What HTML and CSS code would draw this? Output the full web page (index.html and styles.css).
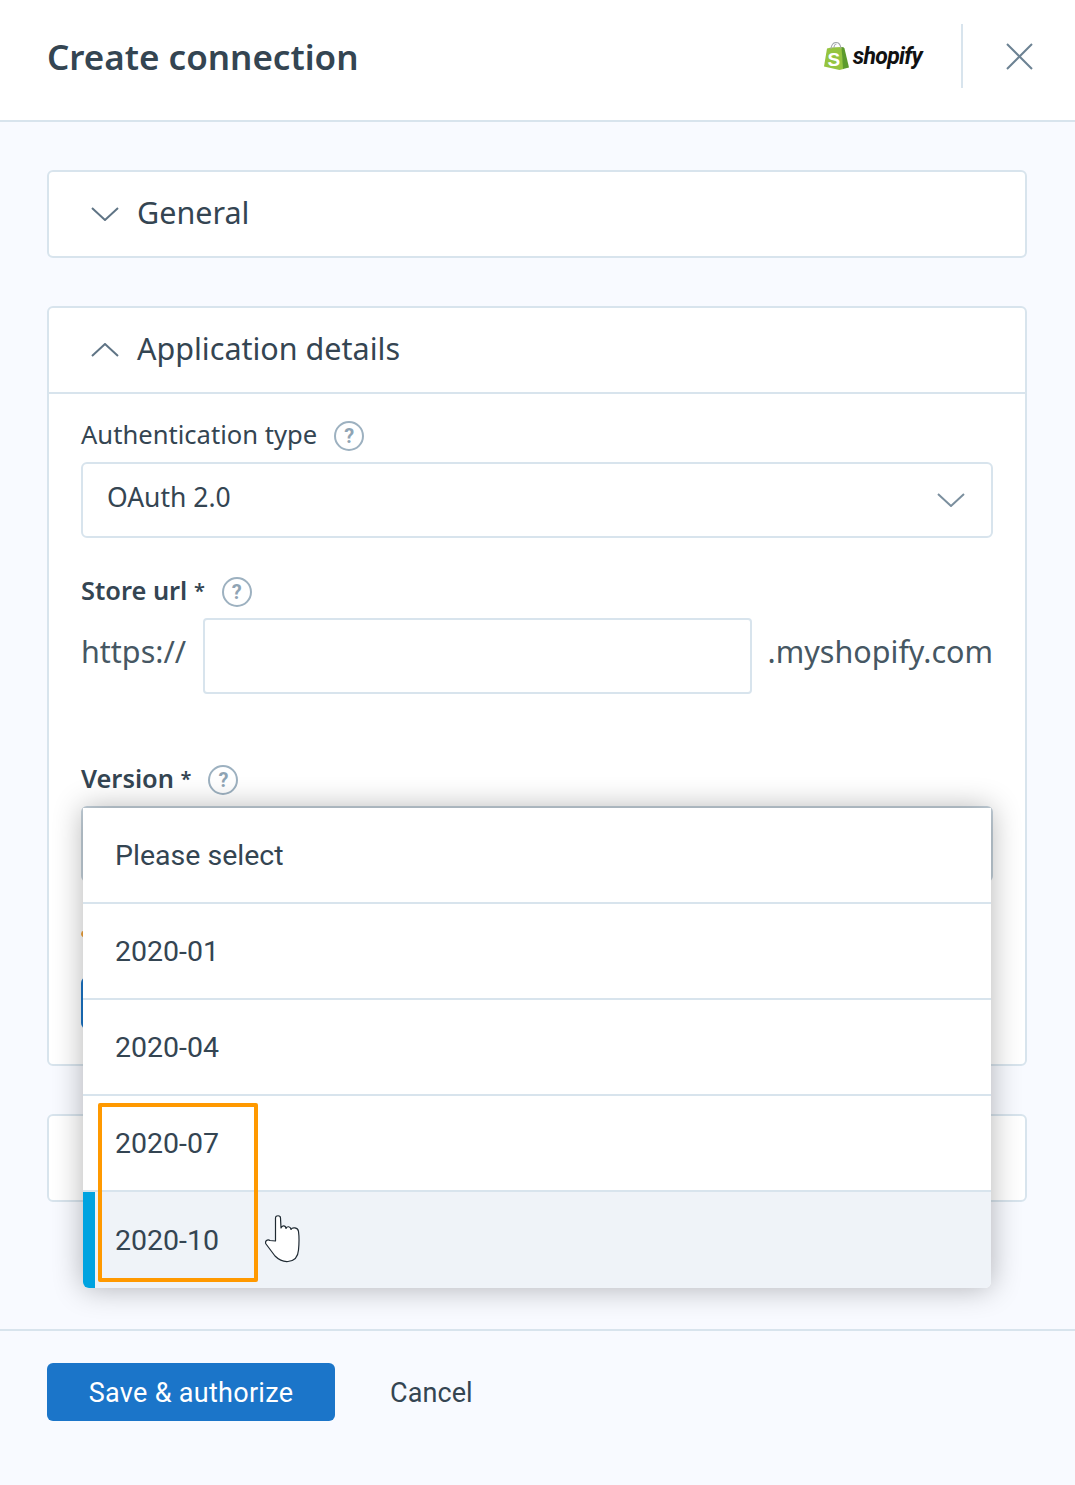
FILE: index.html
```html
<!DOCTYPE html>
<html lang="en">
<head>
<meta charset="utf-8">
<title>Create connection</title>
<link rel="stylesheet" href="styles.css">
</head>
<body>
<div class="page">
  <header class="header">
    <h1 class="title">Create connection</h1>
    <div class="header-right">
      <div class="logo">
        <svg class="logo-bag" width="25" height="28" viewBox="0 0 25 28"><path d="M0 24.500 3 6.500 7 5.500 18 5 19.500 27 15.500 28z" fill="#95c43f"/><path d="M17.500 5l2 .3 1 1.200 4.500 19-6 1.500z" fill="#5c9a2c"/><path d="M7 7C7 3 9.500 .5 12 .5c3 0 4.500 2.500 5 6M10 6c0-2 1-4 2.500-4" fill="none" stroke="#a4a9ac" stroke-width="1.100"/><text x="3.500" y="24" class="logo-s">S</text></svg>
        <span class="logo-text">shopify</span>
      </div>
      <div class="header-sep"></div>
      <button class="close" aria-label="Close">
        <svg width="27" height="27" viewBox="0 0 27 27"><path d="M1 1l25 25M26 1L1 26" stroke="#6c8293" stroke-width="2" fill="none"/></svg>
      </button>
    </div>
  </header>

  <main class="main">
    <section class="card">
      <div class="card-head">
        <svg class="chev" width="28" height="14" viewBox="0 0 28 14"><path d="M1 1l13 12L27 1" fill="none" stroke="#5f7485" stroke-width="2"/></svg>
        <h2 class="card-title">General</h2>
      </div>
    </section>

    <section class="card">
      <div class="card-head card-head-open">
        <svg class="chev" width="28" height="14" viewBox="0 0 28 14"><path d="M1 13L14 1l13 12" fill="none" stroke="#5f7485" stroke-width="2"/></svg>
        <h2 class="card-title">Application details</h2>
      </div>
      <div class="card-body">
        <div class="label-row label-row-auth">
          <span class="label">Authentication type</span>
          <span class="help">?</span>
        </div>
        <div class="select">
          <span>OAuth 2.0</span>
          <svg width="28" height="14" viewBox="0 0 28 14"><path d="M1 1l13 12L27 1" fill="none" stroke="#7b8f9e" stroke-width="2"/></svg>
        </div>

        <div class="label-row label-row-store">
          <span class="label label-strong">Store url <span class="req">*</span></span>
          <span class="help">?</span>
        </div>
        <div class="url-row">
          <span class="url-text url-prefix">https://</span>
          <div class="url-input"></div>
          <span class="url-text">.myshopify.com</span>
        </div>

        <div class="label-row label-row-version">
          <span class="label label-strong">Version <span class="req">*</span></span>
          <span class="help">?</span>
        </div>
        <div class="version-field">
          <div class="select select-under"></div>
          <div class="notice-dot"></div>
          <div class="under-button"></div>
          <ul class="dropdown">
            <li class="option">Please select</li>
            <li class="option">2020-01</li>
            <li class="option">2020-04</li>
            <li class="option">2020-07</li>
            <li class="option option-active">2020-10</li>
          </ul>
          <div class="highlight"></div>
          <svg class="cursor" width="36" height="48" viewBox="0 0 36 48"><path d="M10.500 26 10.500 3C10.500 0 15.500 0 15.500 3L16 13C17 10 20.500 10 21 13.500 22 11 25.500 11 26 14.500 27 12 33 12 33.500 16.500 34.500 24 34 30 33.500 35 33 42 29 46 23 46.500 17 47 13 44 10 41L1 29C-.5 26.500 2.500 23.500 5 25.500z" fill="#fff" stroke="#1f2a33" stroke-width="1.200" stroke-linejoin="round"/></svg>
        </div>
      </div>
    </section>

    <section class="card card-empty"></section>
  </main>

  <footer class="footer">
    <button class="btn-primary">Save &amp; authorize</button>
    <button class="btn-link">Cancel</button>
  </footer>
</div>
</body>
</html>
```

FILE: styles.css
```css
* { box-sizing: border-box; }
html, body { margin: 0; padding: 0; }
body {
  width: 1075px;
  height: 1485px;
  overflow: hidden;
  background: #f8faff;
  color: #344552;
  font-family: "Noto Sans", "Open Sans", sans-serif;
}
.page { display: flex; flex-direction: column; height: 1485px; }

.header {
  height: 122px;
  flex: none;
  background: #fff;
  border-bottom: 2px solid #d8e4ed;
  display: flex;
  align-items: center;
  justify-content: space-between;
  padding: 0 41px 8px 47px;
}
.title { margin: 2px 0 0; font-size: 35px; font-weight: 600; color: #344552; line-height: 44px; }
.header-right { display: flex; align-items: center; }
.logo { display: flex; align-items: center; gap: 4px; margin-right: 39px; }
.logo-bag { display: block; }
.logo-s { font-family: "Liberation Sans", sans-serif; font-weight: 700; font-size: 19px; fill: #fff; }
.logo-text { font-family: "Roboto", sans-serif; font-style: italic; font-weight: 700; font-size: 23px; letter-spacing: -.7px; color: #111; line-height: 29px; }
.header-sep { width: 2px; height: 64px; background: #d8e4ed; margin-right: 43px; }
.close { width: 28px; height: 27px; border: 0; padding: 0; background: none; display: block; }
.close svg { display: block; }

.main { flex: 1; padding: 48px 48px 0 47px; display: flex; flex-direction: column; gap: 48px; }
.card { background: #fff; border: 2px solid #d8e4ed; border-radius: 6px; width: 980px; }
.card-empty { height: 88px; }
.card-head { height: 84px; display: flex; align-items: center; padding-left: 42px; gap: 18px; }
.card-head-open { height: 86px; border-bottom: 2px solid #d8e4ed; }
.chev { display: block; }
.card-title { margin: 0 0 4px; font-size: 30.5px; font-weight: 400; color: #344552; line-height: 40px; }
.card-body { padding: 22px 32px 0; height: 670px; }

.label-row { display: flex; align-items: center; gap: 17px; height: 38px; }
.label-row-auth { padding-top: 2px; }
.label-row-store { margin-top: 35px; }
.label-row-store .label { padding-bottom: 4px; }
.label-row-version { margin-top: 67px; height: 37px; }
.label { font-size: 25.6px; line-height: 36px; color: #344552; padding-bottom: 2px; }
.label-strong { font-size: 25.4px; font-weight: 600; }
.req { font-size: 20px; vertical-align: 2px; }
.help {
  width: 30px; height: 30px; border: 2px solid #9db1c0; border-radius: 50%;
  color: #8fa4b4; font-size: 20px; font-weight: 700; line-height: 26px; text-align: center; flex: none;
  font-family: "Roboto", sans-serif;
}
.select {
  height: 76px; border: 2px solid #d8e4ed; border-radius: 6px; background: #fff;
  display: flex; align-items: center; justify-content: space-between;
  padding: 0 26px 6px 24px; font-size: 26.5px; width: 912px;
  margin-top: 8px;
}
.select svg { margin-top: 6px; }
.url-row { display: flex; align-items: center; gap: 16px; width: 912px; margin-top: 7px; }
.url-text { font-size: 30.5px; line-height: 66px; color: #465763; margin-bottom: 10px; white-space: nowrap; }
.url-prefix { width: 106px; }
.url-input { width: 549px; height: 76px; border: 2px solid #d8e4ed; border-radius: 4px; background: #fff; flex: none; }

.version-field { position: relative; width: 912px; margin-top: 8px; }
.select-under { margin-top: 0; border-color: #c6d3dd; }
.notice-dot { width: 10px; height: 8px; border-radius: 50%; background: #f2a33a; margin-top: 48px; }
.under-button { width: 180px; height: 52px; background: #1a75c9; border-radius: 6px; margin-top: 39px; }

.dropdown {
  position: absolute; top: 2px; left: 2px; width: 908px; margin: 0; padding: 0; list-style: none;
  background: #fff; border-radius: 0 0 6px 6px;
  box-shadow: 0 0 30px rgba(0, 0, 0, .3);
  overflow: hidden;
}
.option {
  height: 96px; border-top: 2px solid #d8e4ed; font-family: "Roboto", sans-serif; font-size: 28.5px;
  line-height: 30px; padding: 33px 0 0 32px; color: #344552;
}
.option:first-child { height: 94px; border-top: 0; padding-top: 33px; }
.option-active { background: #eff3f8; box-shadow: inset 12px 0 0 #00a3e0; padding-top: 34px; height: 98px; }
.highlight {
  position: absolute; left: 17px; top: 297px; width: 160px; height: 179px;
  border: 4px solid #ff9900; border-radius: 2px;
}
.cursor { position: absolute; left: 184px; top: 409px; }

.footer {
  height: 156px; flex: none; border-top: 2px solid #d8e4ed;
  display: flex; align-items: flex-start; padding: 32px 0 0 47px;
}
.btn-primary {
  width: 288px; height: 58px; background: #1b75c9; color: #fff; border: 0; border-radius: 6px; padding: 2px 0 0;
  font-family: "Roboto", sans-serif; font-size: 27px; letter-spacing: .3px;
}
.btn-link {
  margin-left: 55px; height: 58px; padding: 2px 0 0; background: none; border: 0; color: #344552;
  font-family: "Roboto", sans-serif; font-size: 27px; letter-spacing: .1px;
}
```
